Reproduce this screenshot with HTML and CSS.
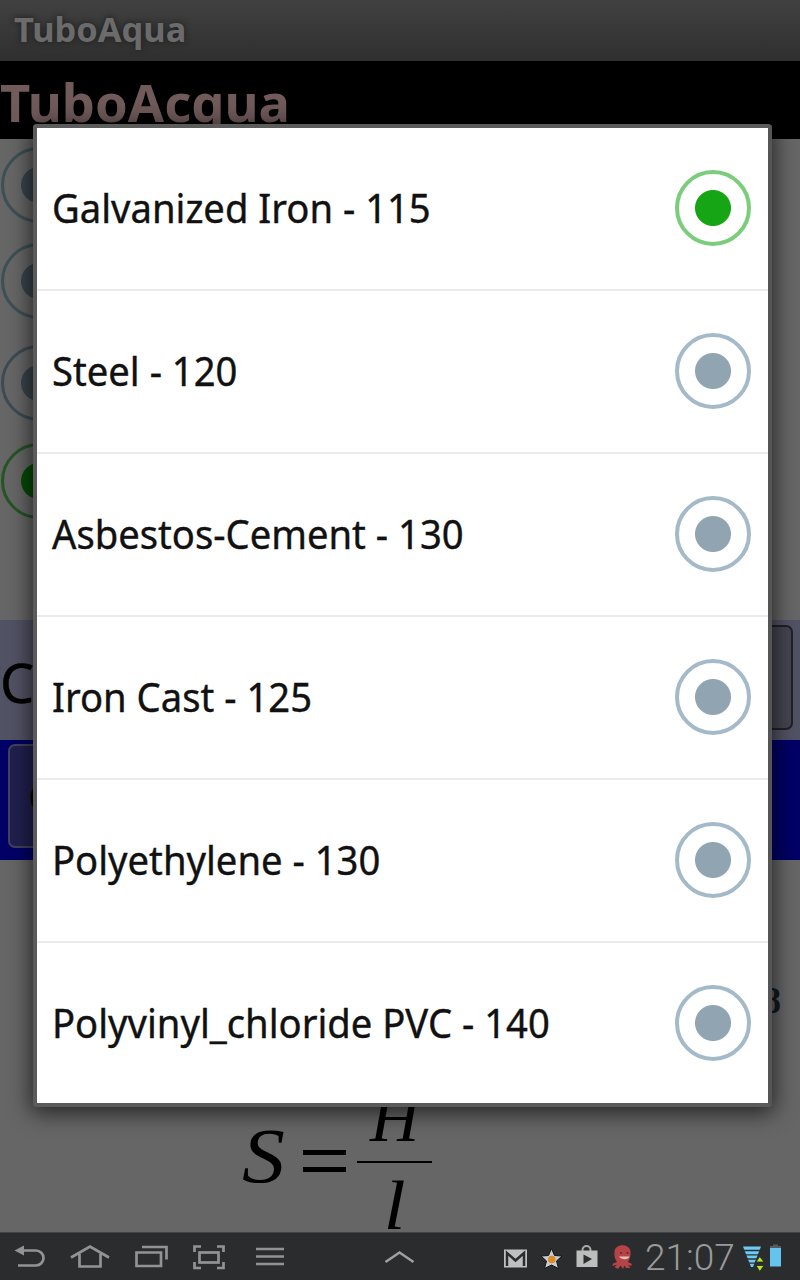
FILE: index.html
```
<!DOCTYPE html>
<html lang="en">
<head>
<meta charset="utf-8">
<title>TuboAqua</title>
<link rel="stylesheet" href="styles.css">
</head>
<body>
<div class="screen">
  <header class="titlebar"><span class="title">TuboAqua</span></header>
  <div class="banner"><span class="banner-text">TuboAcqua</span></div>
  <section class="options">
    <div class="radio dim teal"></div>
    <div class="radio dim teal"></div>
    <div class="radio dim"></div>
    <div class="radio dim on"></div>
  </section>
  <section class="coef"><span class="coef-label">C</span><div class="spinner"></div></section>
  <section class="action"><div class="calc">C</div></section>
  <section class="formulas">
    <div class="exponent">8</div>
    <div class="equation">
      <span class="var-s">S</span>
      <svg class="equals" width="44" height="24" viewBox="0 0 44 24"><path d="M1 3.500H44M1 20.500H44" stroke="#000" stroke-width="5"/></svg>
      <div class="fraction"><span class="num">H</span><span class="den">l</span></div>
    </div>
  </section>
  <footer class="navbar">
    <svg width="300" height="47" viewBox="0 1233 300 47" fill="none" stroke="#929394" stroke-width="2.700">
      <path d="M20 1250.500H36a7.500 7.500 0 0 1 0 15H18"/><path d="M14.500 1250.500L24 1245.500V1255.500Z" fill="#929394" stroke="none"/>
      <path d="M71 1257.500L90 1246.500L109 1257.500M79.500 1254V1266.500H100.500V1254"/>
      <path d="M136.500 1252.500H161V1266H136.500ZM142 1247H166.500V1259.500"/>
      <path d="M194.500 1252V1246.500H201M217 1246.500H223.500V1252M223.500 1262V1268H217M201 1268H194.500V1262"/><rect x="199.500" y="1252.500" width="19" height="10"/>
      <path d="M256 1249H284M256 1256.500H284M256 1264H284"/>
    </svg>
    <svg width="345" height="47" viewBox="300 1233 345 47" fill="none">
      <path d="M385.500 1262L399.500 1252.500L413.500 1262" stroke="#a0a0a0" stroke-width="2.500"/>
      <rect x="504" y="1249.500" width="23" height="18" fill="#c0c0c0"/><path d="M507 1266V1253L515.500 1260.500L524 1253V1266" stroke="#2c2d2e" stroke-width="2.500"/>
      <path d="M551.500 1248.500L554.500 1255.500L562 1256L556.500 1261L558.500 1268.500L551.500 1265L544.500 1268.500L546.500 1261L541 1256L548.500 1255.500Z" fill="#c9cdd1" stroke="#111519" stroke-width="1"/><circle cx="551.800" cy="1259.500" r="3.800" fill="#df8a27"/>
      <path d="M582.500 1251v-1a4 4 0 0 1 8 0v1" stroke="#aaa" stroke-width="2"/><path d="M576.500 1250.500H597.500V1267H576.500Z" fill="#bdbdbd"/><path d="M583.500 1254.500L592 1259L583.500 1264Z" fill="#2c2d2e"/>
      <path d="M614.500 1252C614.500 1243 630.500 1243 630.500 1252C631 1257 629 1260 628 1262L632 1264L631 1266L628 1265L630.500 1268H626L624.500 1265.500L623 1269L620.500 1265.500L618 1269L614.500 1267L617 1264.500L612.500 1266L613 1263.500L617 1262C615 1259 614 1256 614.500 1252Z" fill="#b64347"/><path d="M619 1256.500H629.500C628.500 1260 621 1260 619 1256.500Z" fill="#d9c3be"/><circle cx="621" cy="1253" r="1" fill="#682327"/><circle cx="627.500" cy="1253" r="1" fill="#682327"/>
    </svg>
    <span class="clock">21:07</span>
    <svg width="64" height="47" viewBox="736 1233 64 47">
      <path d="M743 1246.500H761L753 1267H751Z" fill="#72c9ef"/><path d="M743 1250.500H762M744 1254.800H760M746 1259H759M748 1263.200H757" stroke="#24333b" stroke-width="1.300"/>
      <path d="M759.800 1256.500L764 1262H756ZM759.800 1271.500L764 1265.500H756Z" fill="#b5e52a" stroke="#24272a" stroke-width=".8"/>
      <path d="M770 1248V1246H773V1244.500H778V1246H781V1248Z" fill="#58595a"/><rect x="770" y="1248" width="11" height="18.500" fill="#66c2ef"/>
    </svg>
  </footer>
  <div class="dialog" role="dialog">
    <div class="row"><span class="label">Galvanized Iron - 115</span><div class="radio on"></div></div>
    <div class="row"><span class="label">Steel - 120</span><div class="radio"></div></div>
    <div class="row"><span class="label">Asbestos-Cement - 130</span><div class="radio"></div></div>
    <div class="row"><span class="label">Iron Cast - 125</span><div class="radio"></div></div>
    <div class="row"><span class="label">Polyethylene - 130</span><div class="radio"></div></div>
    <div class="row"><span class="label">Polyvinyl_chloride PVC - 140</span><div class="radio"></div></div>
  </div>
</div>
</body>
</html>
```
FILE: styles.css
```
* { box-sizing: border-box; }
body { margin: 0; font-family: "Noto Sans", sans-serif; }
.screen { position: relative; width: 800px; height: 1280px; overflow: hidden; display: flex; flex-direction: column; background: #666; }
.titlebar { height: 61px; flex: none; background: linear-gradient(#414141, #2f2f2f); padding-left: 14px; }
.title { display: inline-block; transform-origin: left; transform: scaleX(1.012); font-size: 34px; line-height: 58px; font-weight: 700; color: #6b6b6b; text-shadow: 0 0 6px #1c1c1c; }
.banner { height: 78px; flex: none; background: #000; }
.banner-text { display: inline-block; transform-origin: left; transform: scaleX(1.01); font-size: 52px; line-height: 81px; font-weight: 700; color: #705a5a; }
.options { height: 481px; flex: none; padding: 8px 0 0 1px; display: grid; grid-template-rows: 96px 102px 98px 76px; }
.coef { height: 120px; flex: none; background: #525265; display: flex; justify-content: space-between; padding: 5px 7px 10px 0; }
.coef-label { font-size: 54px; line-height: 114px; -webkit-text-stroke: .5px #000; }
.spinner { width: 400px; height: 105px; border: 2px solid #202027; border-radius: 7px; background: #454551; }
.action { height: 120px; flex: none; background: #000066; padding: 4px 0 0 8px; }
.calc { width: 220px; height: 104px; border: 2px solid #42425c; border-radius: 7px; background: #20204f; padding-left: 18px; font-size: 40px; line-height: 102px; }
.formulas { height: 372px; flex: none; font-family: "Liberation Serif", serif; }
.exponent { height: 232px; padding: 120px 19px 0 0; text-align: right; font-size: 37px; line-height: 42px; font-weight: 700; color: #101b20; }
.equation { height: 140px; display: flex; padding-left: 242px; font-style: italic; }
.var-s { width: 60px; font-size: 78px; line-height: 128px; transform-origin: left; transform: scaleX(1.1); }
.equals { margin-top: 57px; }
.fraction { width: 75px; margin-left: 11px; display: flex; flex-direction: column; align-items: center; }
.num { width: 75px; height: 71px; flex: none; border-bottom: 2px solid #000; font-size: 68px; line-height: 52px; text-align: center; }
.den { font-size: 70px; line-height: 68px; margin-top: 9px; transform: scaleX(1.12); }
.navbar { height: 48px; flex: none; background: #2b2c2d; border-top: 1px solid #434445; display: flex; }
.clock { width: 91px; font: 300 37px/49px Roboto, sans-serif; color: #999a9b; white-space: nowrap; }
.dialog { position: absolute; left: 33px; top: 124px; width: 739px; height: 983px; border: 4px solid #5b5b5b; border-right-color: #555; border-radius: 4px; background: #fff; box-shadow: 0 4px 22px 2px rgba(0,0,0,.65); display: grid; grid-template-rows: repeat(6, 163px); }
.row { display: flex; align-items: center; justify-content: space-between; padding: 0 17px 2px 15px; border-bottom: 2px solid #ebebeb; }
.row:last-child { border-bottom: 0; height: 161px; }
.label { font-size: 40px; line-height: 54px; padding-top: 1px; color: #111; white-space: nowrap; -webkit-text-stroke: .4px #111; transform-origin: left; transform: scaleX(.955); }
.radio { width: 76px; height: 76px; flex: none; border-radius: 50%; border: 4px solid #a5bac8; background: radial-gradient(circle, #90a4b2 17.500px, transparent 18.500px); }
.radio.on { border-color: #7bcd7b; background: radial-gradient(circle, #15a515 17.500px, transparent 18.500px); }
.radio.dim { border: 3px solid #3e4b52; background: radial-gradient(circle, #39444b 17.500px, transparent 18.500px); }
.radio.dim.teal { border-color: #3d5054; }
.radio.dim.on { border-color: #265426; background: radial-gradient(circle, #064b06 17.500px, transparent 18.500px); }
```
